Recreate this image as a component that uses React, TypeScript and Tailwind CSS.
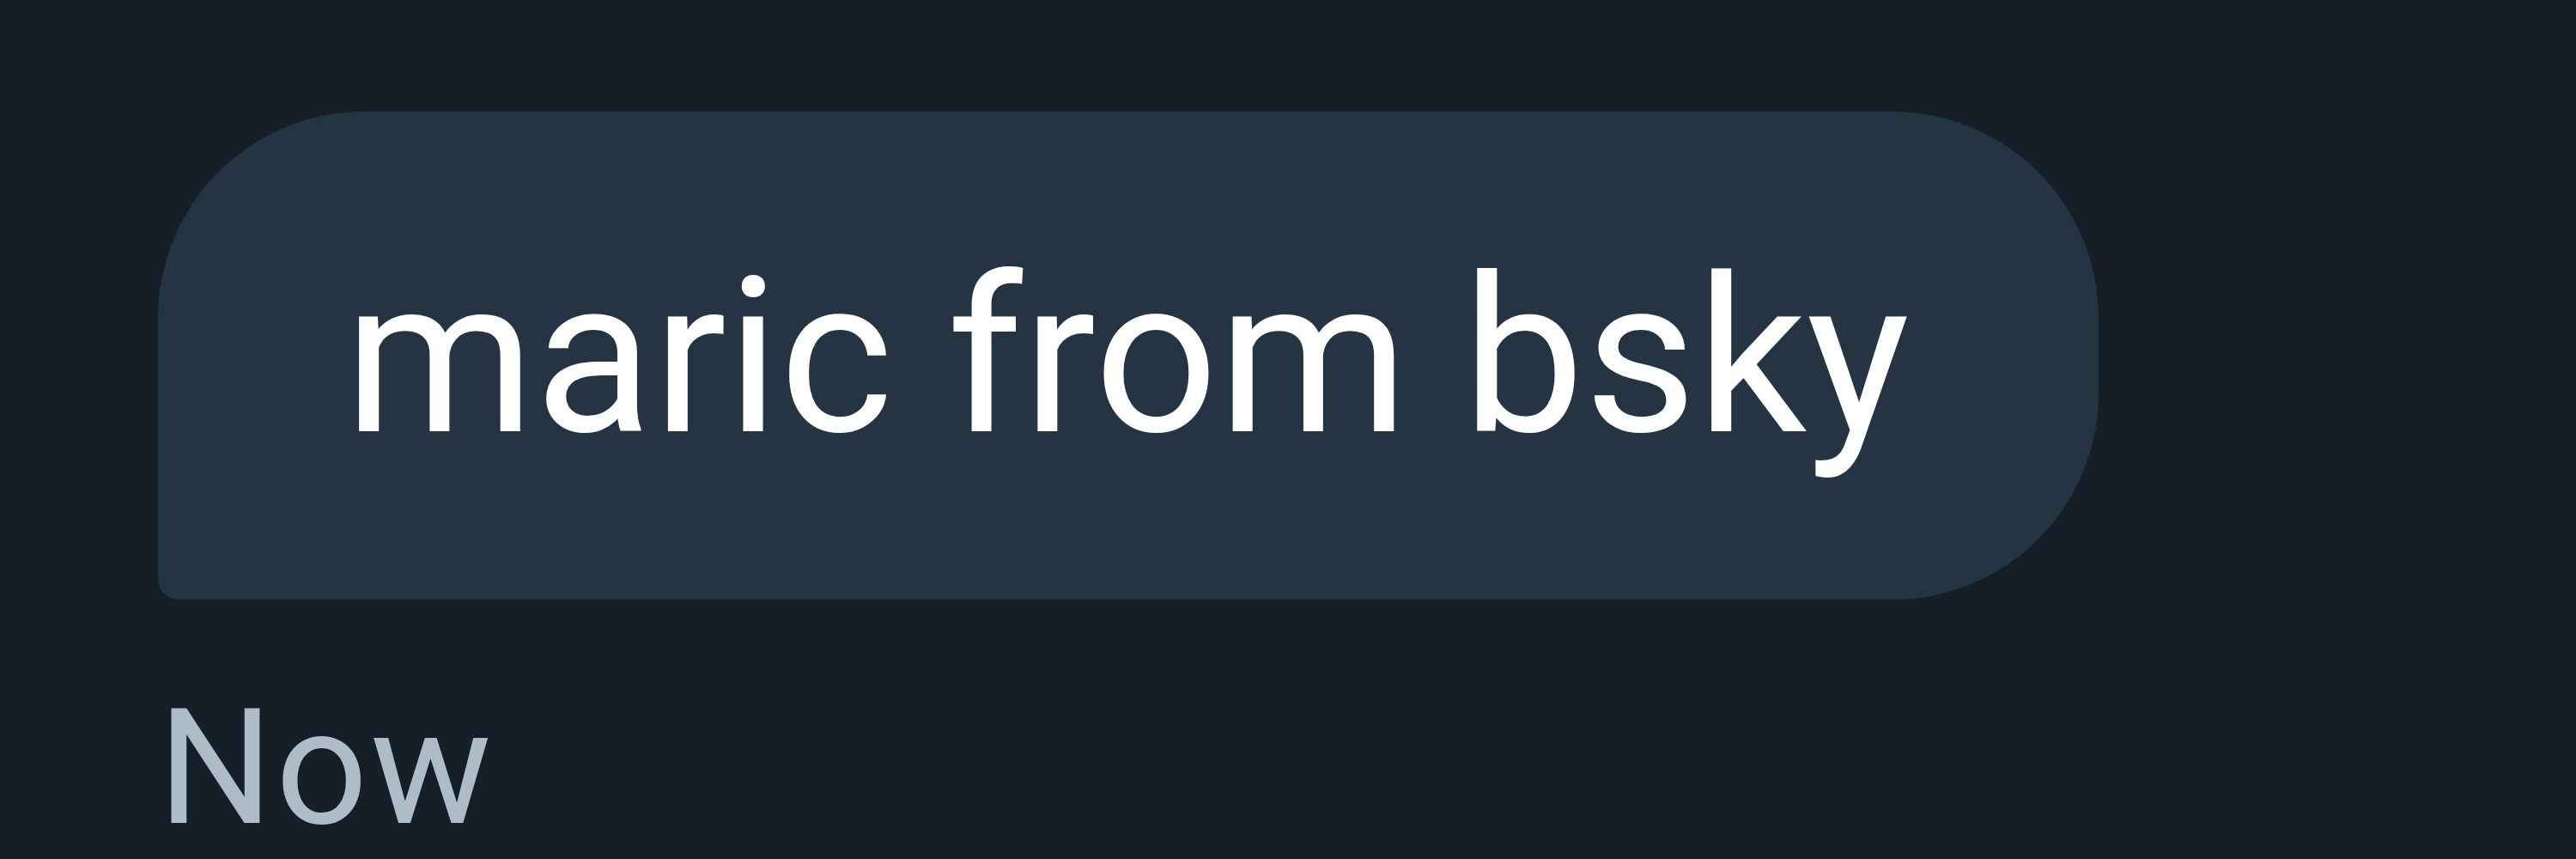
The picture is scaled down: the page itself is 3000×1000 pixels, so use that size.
export default function App() {
  return (
    <div className="w-[3000px] h-[1000px] bg-[#161e27] overflow-hidden font-['Roboto',sans-serif]">
      <div className="flex flex-col items-start pl-[184px] pt-[130px]">
        <div className="bg-[#253442] rounded-[240px] rounded-bl-[24px] pl-[217px] pr-[220px] pt-[159px] pb-[156px]">
          <p className="text-[253px] leading-none text-white whitespace-nowrap">maric from bsky</p>
        </div>
        <p className="mt-[102px] text-[188px] leading-none tracking-[3px] text-[#aebbc9]">Now</p>
      </div>
    </div>
  )
}
